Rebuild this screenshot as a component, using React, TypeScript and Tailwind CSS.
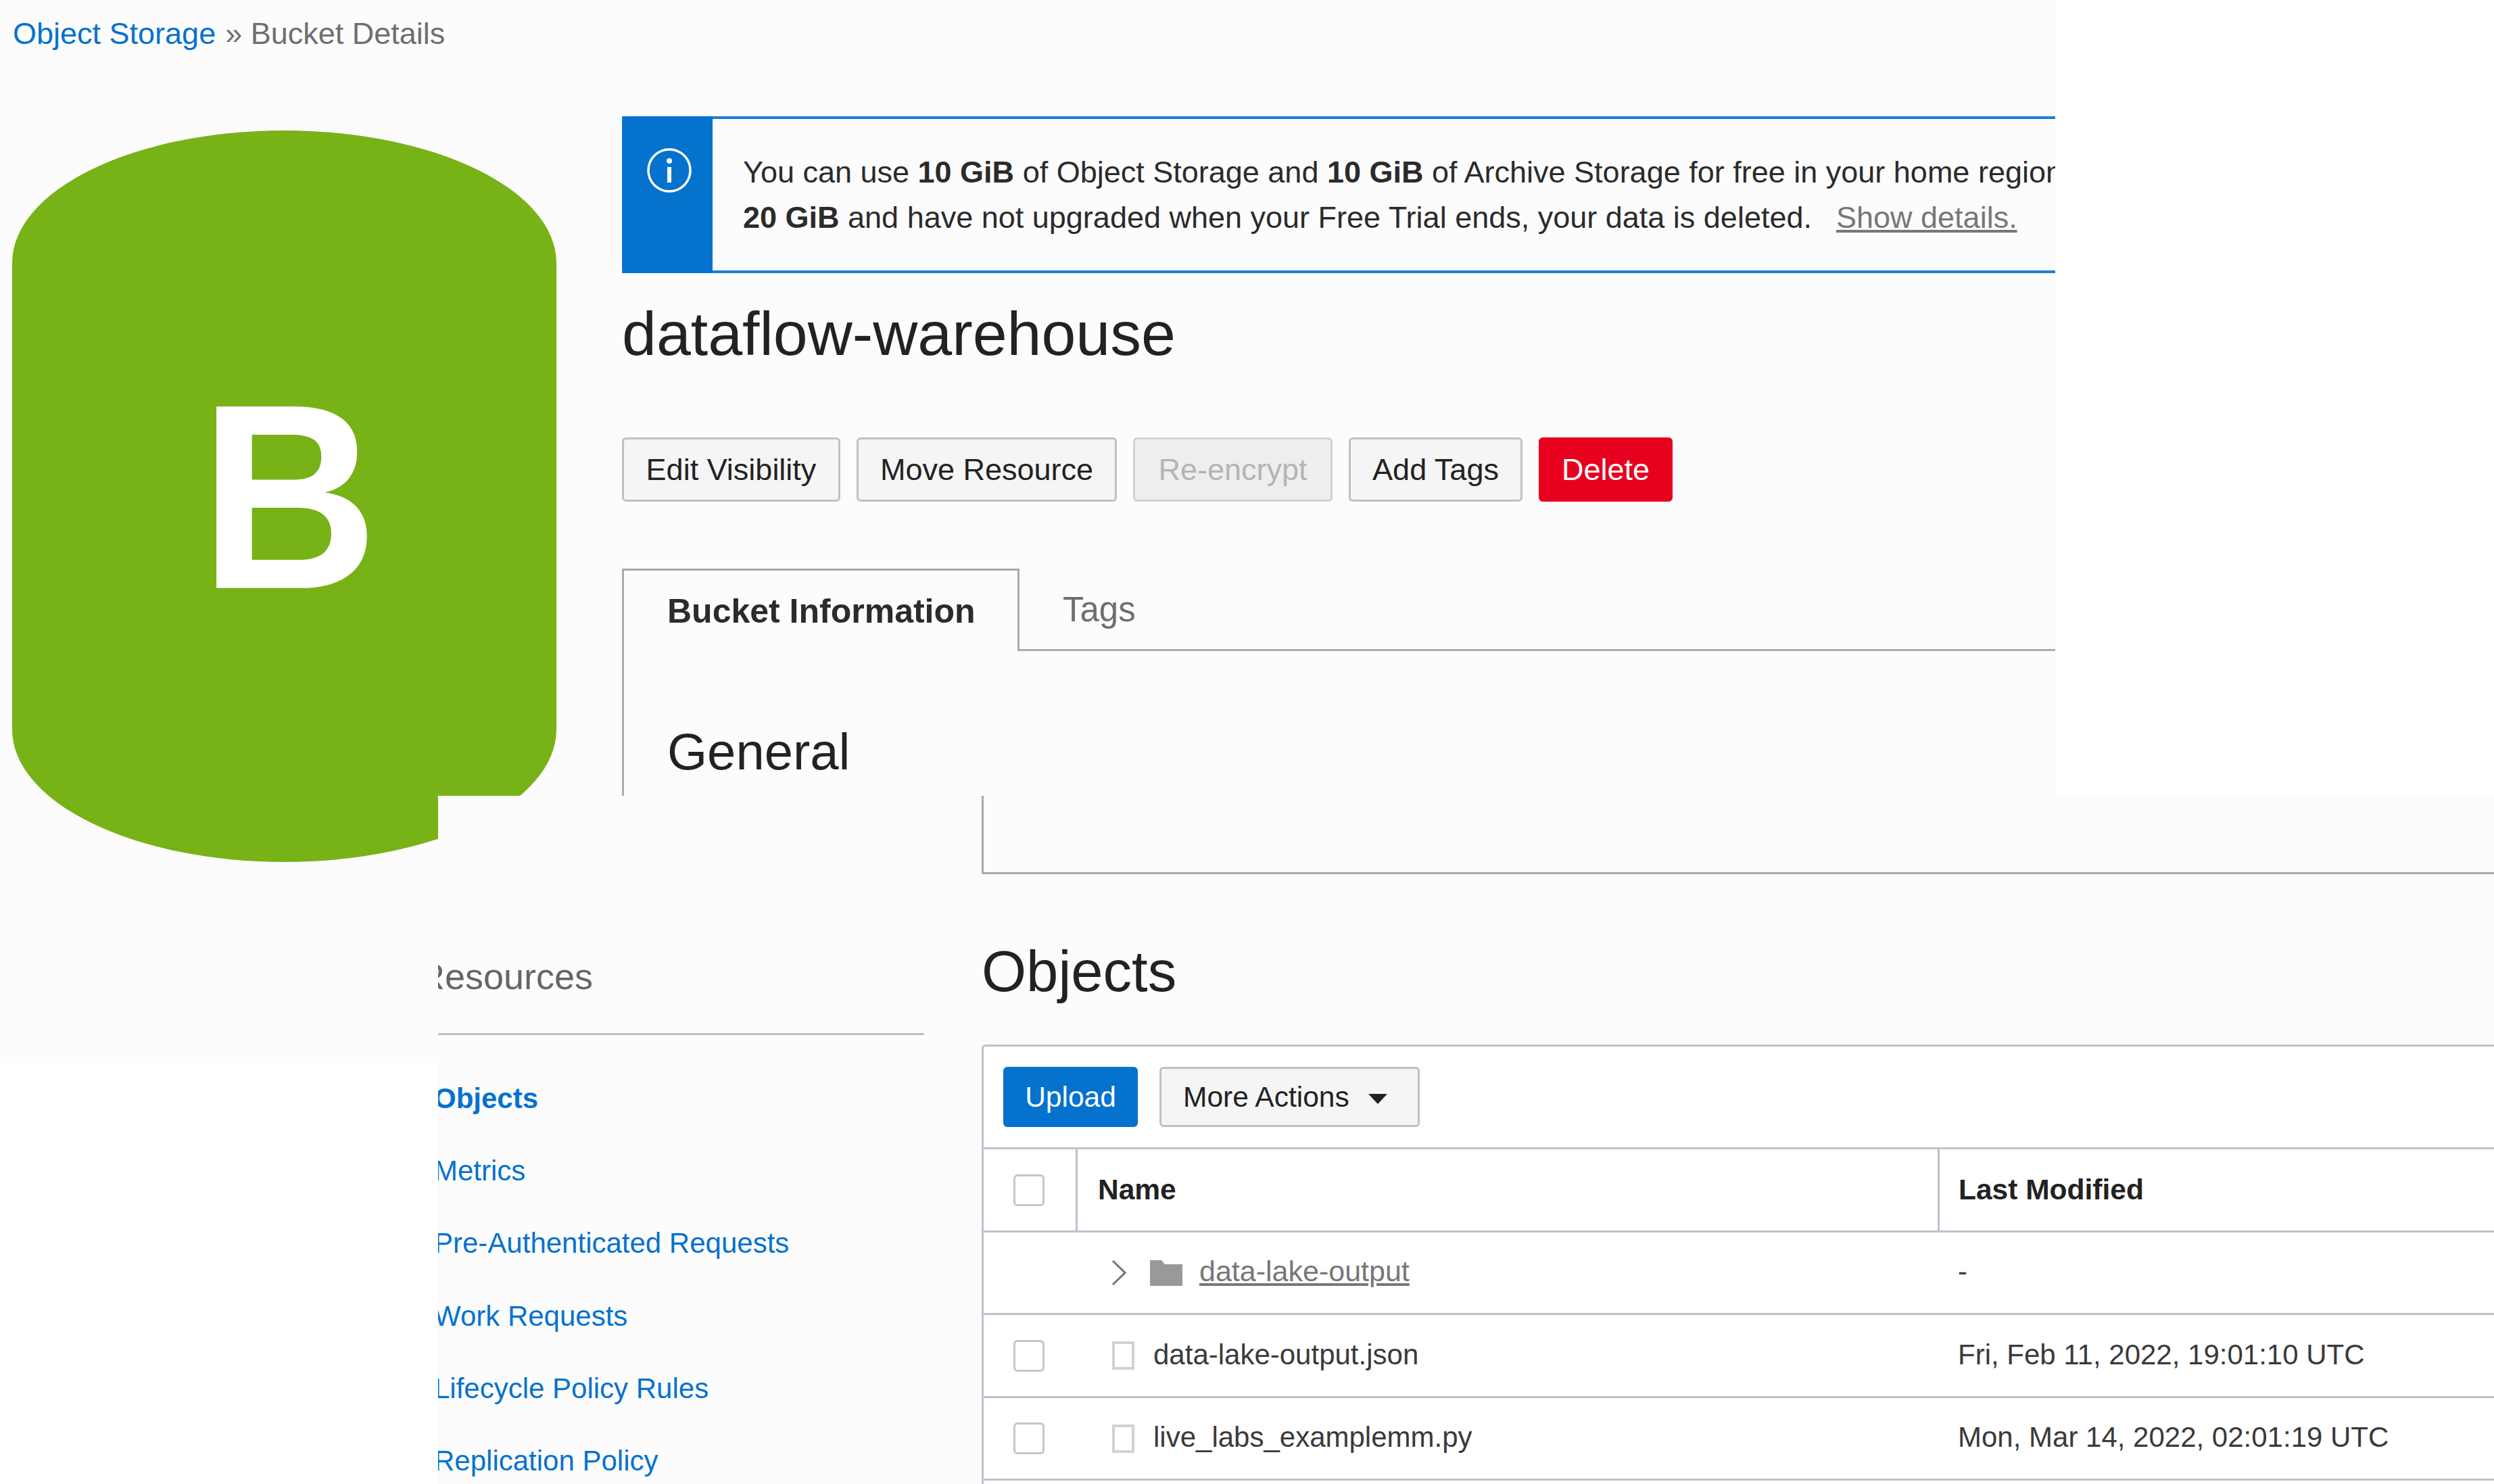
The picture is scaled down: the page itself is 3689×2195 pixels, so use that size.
const SANS = "font-['Liberation_Sans',Arial,sans-serif]";

const ACTIONS = [
  { label: 'Edit Visibility', w: 'w-[323px]', cls: 'bg-[#f5f5f5] border-[#bcc1ca] text-[#222222]' },
  { label: 'Move Resource', w: 'w-[385px]', cls: 'bg-[#f5f5f5] border-[#bcc1ca] text-[#222222]' },
  { label: 'Re-encrypt', w: 'w-[295px]', cls: 'bg-[#eeeeee] border-[#cfd2d6] text-[#b4b4b4]' },
  { label: 'Add Tags', w: 'w-[257px]', cls: 'bg-[#f5f5f5] border-[#bcc1ca] text-[#222222]' },
  { label: 'Delete', w: 'w-[198px]', cls: 'bg-[#e8001f] border-[#e8001f] text-white' },
];

const LINKS = ['Objects', 'Metrics', 'Pre-Authenticated Requests', 'Work Requests', 'Lifecycle Policy Rules', 'Replication Policy'];

const FILES = [
  { name: 'data-lake-output.json', modified: 'Fri, Feb 11, 2022, 19:01:10 UTC', h: 'h-[123px]' },
  { name: 'live_labs_examplemm.py', modified: 'Mon, Mar 14, 2022, 02:01:19 UTC', h: 'h-[122px]' },
];

function InfoIcon() {
  return (
    <svg width="68" height="68" viewBox="0 0 68 68" fill="none">
      <circle cx="34" cy="34" r="31" stroke="white" strokeWidth="3.5" />
      <circle cx="34" cy="20" r="4" fill="white" />
      <rect x="31" y="29" width="6" height="23" fill="white" />
    </svg>
  );
}

function Checkbox() {
  return <div className="w-[46px] h-[47px] rounded-[6px] border-[3px] border-[#c2c6cd] bg-white" />;
}

function FileIcon() {
  return <div className="w-[33px] h-[42px] border-[4px] border-[#d2d2d2] bg-white" />;
}

function FolderIcon() {
  return (
    <svg width="48" height="38" viewBox="0 0 48 38">
      <path d="M0 0H17L22 6H48V38H0Z" fill="#999999" />
    </svg>
  );
}

function Chevron() {
  return (
    <svg width="22" height="37" viewBox="0 0 22 37" fill="none">
      <path d="M2 1L20 18.5L2 36" stroke="#777777" strokeWidth="3" />
    </svg>
  );
}

export default function App() {
  return (
    <div className={`${SANS} w-[3689px] h-[2195px] bg-white overflow-hidden flex flex-col`}>
      {/* top slice */}
      <div className="relative z-10 w-[3040px] h-[1177px] shrink-0 bg-[#fcfcfc]">
        <div className="h-[100px] pl-[19px] flex items-center text-[45px] text-[#6f6f6f] whitespace-nowrap">
          <span className="text-[#0572ce]">Object Storage</span>
          <span className="ml-[14px]">» Bucket Details</span>
        </div>
        <div className="flex items-start pl-[18px] gap-[97px]">
          <div className="mt-[93px] w-[805px] h-[1082px] shrink-0 bg-[#77b217] rounded-[402.5px/196px] flex items-center justify-center">
            <span className="pl-[14px] text-[365px] leading-none font-bold text-white scale-y-[1.07]">B</span>
          </div>

          <div className="mt-[72px] w-[2120px] h-[1005px] overflow-hidden">
            <div className="h-[232px] flex border-y-[4px] border-[#1a7fd4] whitespace-nowrap">
              <div className="w-[134px] shrink-0 -my-[4px] bg-[#0572ce] rounded-l-[6px] pt-[46px] pl-[36px] flex items-start">
                <InfoIcon />
              </div>
              <div className="pl-[45px] pt-[45px] text-[45px] leading-[67px] text-[#2b2b2b]">
                <p>
                  You can use <b>10 GiB</b> of Object Storage and <b>10 GiB</b> of Archive Storage for free in your home region. If you exceed
                </p>
                <p>
                  <b>20 GiB</b> and have not upgraded when your Free Trial ends, your data is deleted.
                  <span className="ml-[36px] text-[#777777] underline">Show details.</span>
                </p>
              </div>
            </div>

            <h1 className="h-[180px] flex items-center text-[91.5px] text-[#222222]">dataflow-warehouse</h1>

            <div className="mt-[63px] flex gap-[24px]">
              {ACTIONS.map((a) => (
                <div key={a.label} className={`${a.w} h-[95px] rounded-[6px] border-[3px] flex items-center justify-center text-[45px] ${a.cls}`}>
                  {a.label}
                </div>
              ))}
            </div>

            <div className="mt-[99px] h-[122px] flex border-b-[3px] border-[#aaaaaa]">
              <div className="w-[588px] h-[122px] border-x-[3px] border-t-[3px] border-[#aaaaaa] bg-[#fcfcfc] pl-[64px] pt-[2px] flex items-center text-[50px] font-bold text-[#2b2b2b]">
                Bucket Information
              </div>
              <div className="pl-[64px] pt-[3px] flex items-center text-[51px] text-[#6f6f6f]">Tags</div>
            </div>

            <div className="h-[215px] border-l-[3px] border-[#aaaaaa] pl-[64px] pt-[104px]">
              <h2 className="text-[76px] leading-[90px] text-[#222222]">General</h2>
            </div>
          </div>
        </div>
      </div>

      {/* bottom slice */}
      <div className="flex flex-1 min-h-0">
        <div className="w-[648px] h-[395px] shrink-0 bg-[#fcfcfc]" />
        <div className="relative z-20 flex flex-1 min-w-0 bg-[#fcfcfc]">
          <aside className="w-[804px] shrink-0 overflow-hidden">
            <div className="ml-[-29px] mt-[236px] text-[54px] leading-[62px] text-[#666666]">Resources</div>
            <div className="mt-[53px] w-[719px] h-[3px] bg-[#bcc1ca]" />
            <ul className="ml-[-6px] mt-[40px] text-[42px] text-[#0572ce] whitespace-nowrap">
              {LINKS.map((l, i) => (
                <li key={l} className={`h-[107.2px] leading-[107px] ${i === 0 ? 'font-bold' : ''}`}>{l}</li>
              ))}
            </ul>
          </aside>

          <main className="flex-1 min-w-0">
            <div className="h-[116px] border-l-[3px] border-b-[3px] border-[#aaaaaa]" />
            <h2 className="h-[252px] pt-[94px] text-[85px] leading-[100px] text-[#222222]">Objects</h2>
            <section className="h-[650px] bg-white border-l-[3px] border-t-[3px] border-[#bcc3cd] rounded-tl-[6px]">
              <div className="h-[149px] pt-[30px] pl-[29px] flex gap-[32px]">
                <div className="w-[199px] h-[89px] rounded-[6px] bg-[#0572ce] text-white text-[42.5px] flex items-center justify-center">Upload</div>
                <div className="w-[385px] h-[89px] rounded-[6px] bg-[#f5f5f5] border-[3px] border-[#bcc1ca] text-[42.5px] text-[#222222] flex items-center pl-[32px]">
                  More Actions
                  <span className="ml-[28px] mt-[6px] w-0 h-0 border-x-[14px] border-t-[15px] border-x-transparent border-t-[#222222]" />
                </div>
              </div>

              <div className="grid grid-cols-[136px_1275px_1fr] h-[123px] border-t-[3px] border-[#bcc3cd] text-[42.5px] font-bold text-[#222222]">
                <div className="flex items-center pl-[44px]"><Checkbox /></div>
                <div className="flex items-center pl-[30px] border-l-[3px] border-[#bcc3cd]">Name</div>
                <div className="flex items-center pl-[28px] border-l-[3px] border-[#bcc3cd]">Last Modified</div>
              </div>

              <div className="grid grid-cols-[136px_1275px_1fr] h-[122px] border-t-[3px] border-[#bcc3cd] text-[42px] text-[#3a3a3a]">
                <div />
                <div className="flex items-center pl-[53px]">
                  <Chevron />
                  <span className="ml-[35px]"><FolderIcon /></span>
                  <span className="ml-[25px] pb-[4px] text-[43px] text-[#777777] underline">data-lake-output</span>
                </div>
                <div className="flex items-center pl-[30px] pb-[4px]">-</div>
              </div>

              {FILES.map((f) => (
                <div key={f.name} className={`grid grid-cols-[136px_1275px_1fr] ${f.h} border-t-[3px] border-[#bcc3cd] text-[42px] text-[#3a3a3a]`}>
                  <div className="flex items-center pl-[44px]"><Checkbox /></div>
                  <div className="flex items-center pl-[54px]">
                    <FileIcon />
                    <span className="ml-[28px] pb-[4px]">{f.name}</span>
                  </div>
                  <div className="flex items-center pl-[30px] pb-[4px]">{f.modified}</div>
                </div>
              ))}
              <div className="border-t-[3px] border-[#bcc3cd]" />
            </section>
          </main>
        </div>
      </div>
    </div>
  );
}
